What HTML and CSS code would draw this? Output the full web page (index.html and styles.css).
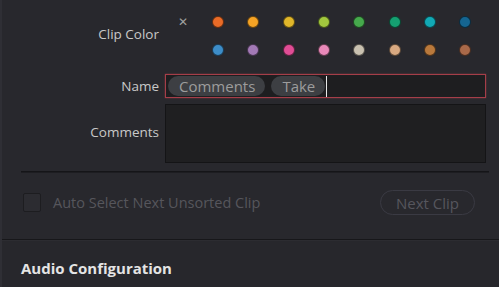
FILE: index.html
```html
<!DOCTYPE html>
<html>
<head>
<meta charset="utf-8">
<link rel="stylesheet" href="styles.css">
</head>
<body>
<div class="panel">
  <div class="section">
    <div class="row row-color">
      <div class="label">Clip Color</div>
      <div class="swatches">
        <span class="clear">&#x2715;</span>
        <span class="dot" style="background:#e96b27"></span>
        <span class="dot" style="background:#f5a325"></span>
        <span class="dot" style="background:#e0b62a"></span>
        <span class="dot" style="background:#a2c83e"></span>
        <span class="dot" style="background:#46a94c"></span>
        <span class="dot" style="background:#15a071"></span>
        <span class="dot" style="background:#12a9b5"></span>
        <span class="dot" style="background:#156591"></span>
        <span class="empty"></span>
        <span class="dot" style="background:#3d8dc8"></span>
        <span class="dot" style="background:#a279b5"></span>
        <span class="dot" style="background:#e04d95"></span>
        <span class="dot" style="background:#e989b9"></span>
        <span class="dot" style="background:#c9c1b0"></span>
        <span class="dot" style="background:#d8a981"></span>
        <span class="dot" style="background:#b9793c"></span>
        <span class="dot" style="background:#a96949"></span>
      </div>
    </div>
    <div class="row row-name">
      <div class="label">Name</div>
      <div class="name-input">
        <span class="chip">Comments</span>
        <span class="chip">Take</span>
        <span class="caret"></span>
      </div>
    </div>
    <div class="row row-comments">
      <div class="label">Comments</div>
      <div class="textarea"></div>
    </div>
    <div class="divider"></div>
    <div class="actions">
      <label class="check"><span class="box"></span><span class="check-text">Auto Select Next Unsorted Clip</span></label>
      <button class="next">Next Clip</button>
    </div>
  </div>
  <div class="audio">
    <h2 class="audio-title">Audio Configuration</h2>
  </div>
</div>
</body>
</html>
```

FILE: styles.css
```css
* { box-sizing: border-box; }
html, body {
  margin: 0;
  padding: 0;
  background: #28282d;
  width: 499px;
  height: 287px;
  overflow: hidden;
}
body {
  font-family: "Open Sans", "Noto Sans", sans-serif;
  color: #c8c8c8;
}
.panel {
  height: 287px;
  border-left: 2px solid #2f2f35;
  display: flex;
  flex-direction: column;
}
.section {
  padding-top: 8px;
  border-bottom: 1px solid #17171a;
  padding-bottom: 24px;
}
.row {
  display: grid;
  grid-template-columns: 157px 321px;
  column-gap: 6px;
}
.label {
  text-align: right;
  font-size: 13.5px;
  color: #c8c8c8;
  align-self: center;
}
.row-color .label { padding-bottom: 4px; }
.swatches {
  display: grid;
  grid-template-columns: repeat(9, 35.33px);
  grid-auto-rows: 28px;
  align-items: center;
  justify-items: center;
}
.clear {
  font-size: 12px;
  color: #a0a0a0;
  line-height: 1;
  padding-bottom: 1px;
}
.dot {
  width: 12px;
  height: 12px;
  border-radius: 50%;
  border: 1px solid rgba(0,0,0,0.55);
}
.row-name { margin-top: 10px; }
.name-input {
  height: 24px;
  border: 1px solid #a53e49;
  box-shadow: 0 0 1.5px rgba(190,70,80,0.6);
  background: #1e1e20;
  display: flex;
  align-items: center;
  gap: 6px;
  padding-left: 2px;
}
.chip {
  height: 20px;
  line-height: 20px;
  border-radius: 10px;
  background: #3d3f43;
  color: #9c9c9c;
  font-size: 15px;
  padding: 0 10px 0 11px;
}
.caret {
  width: 1px;
  height: 21px;
  background: #e8e8e8;
  margin-left: -5px;
}
.row-comments { margin-top: 6px; }
.row-comments .label { padding-bottom: 3px; }
.textarea {
  height: 59px;
  border: 1px solid #141416;
  background: #1f1f21;
}
.divider {
  margin: 8px 10px 0 19px;
  height: 1px;
  background: #151518;
  box-shadow: 0 1px 0 #1d1d21;
}
.actions {
  margin-top: 18px;
  display: flex;
  align-items: center;
  justify-content: space-between;
  padding: 0 24px 0 21px;
}
.check {
  display: flex;
  align-items: center;
  gap: 12px;
}
.box {
  width: 18px;
  height: 19px;
  border: 1px solid #1d1d20;
  background: #2c2c31;
  border-radius: 2px;
}
.check-text {
  font-size: 14.5px;
  color: #56565c;
}
.next {
  width: 95px;
  height: 25px;
  border-radius: 13px;
  border: 1px solid #3a3a43;
  background: transparent;
  font-family: inherit;
  font-size: 15px;
  color: #56565d;
  padding: 0;
}
.audio {
  flex: 1;
  background: #27272c;
  border-top: 1px solid #2c2c31;
  padding-left: 19px;
}
.audio-title {
  margin: 17px 0 0 0;
  font-size: 15px;
  font-weight: 700;
  color: #e4e4e4;
  line-height: 20px;
}
```
